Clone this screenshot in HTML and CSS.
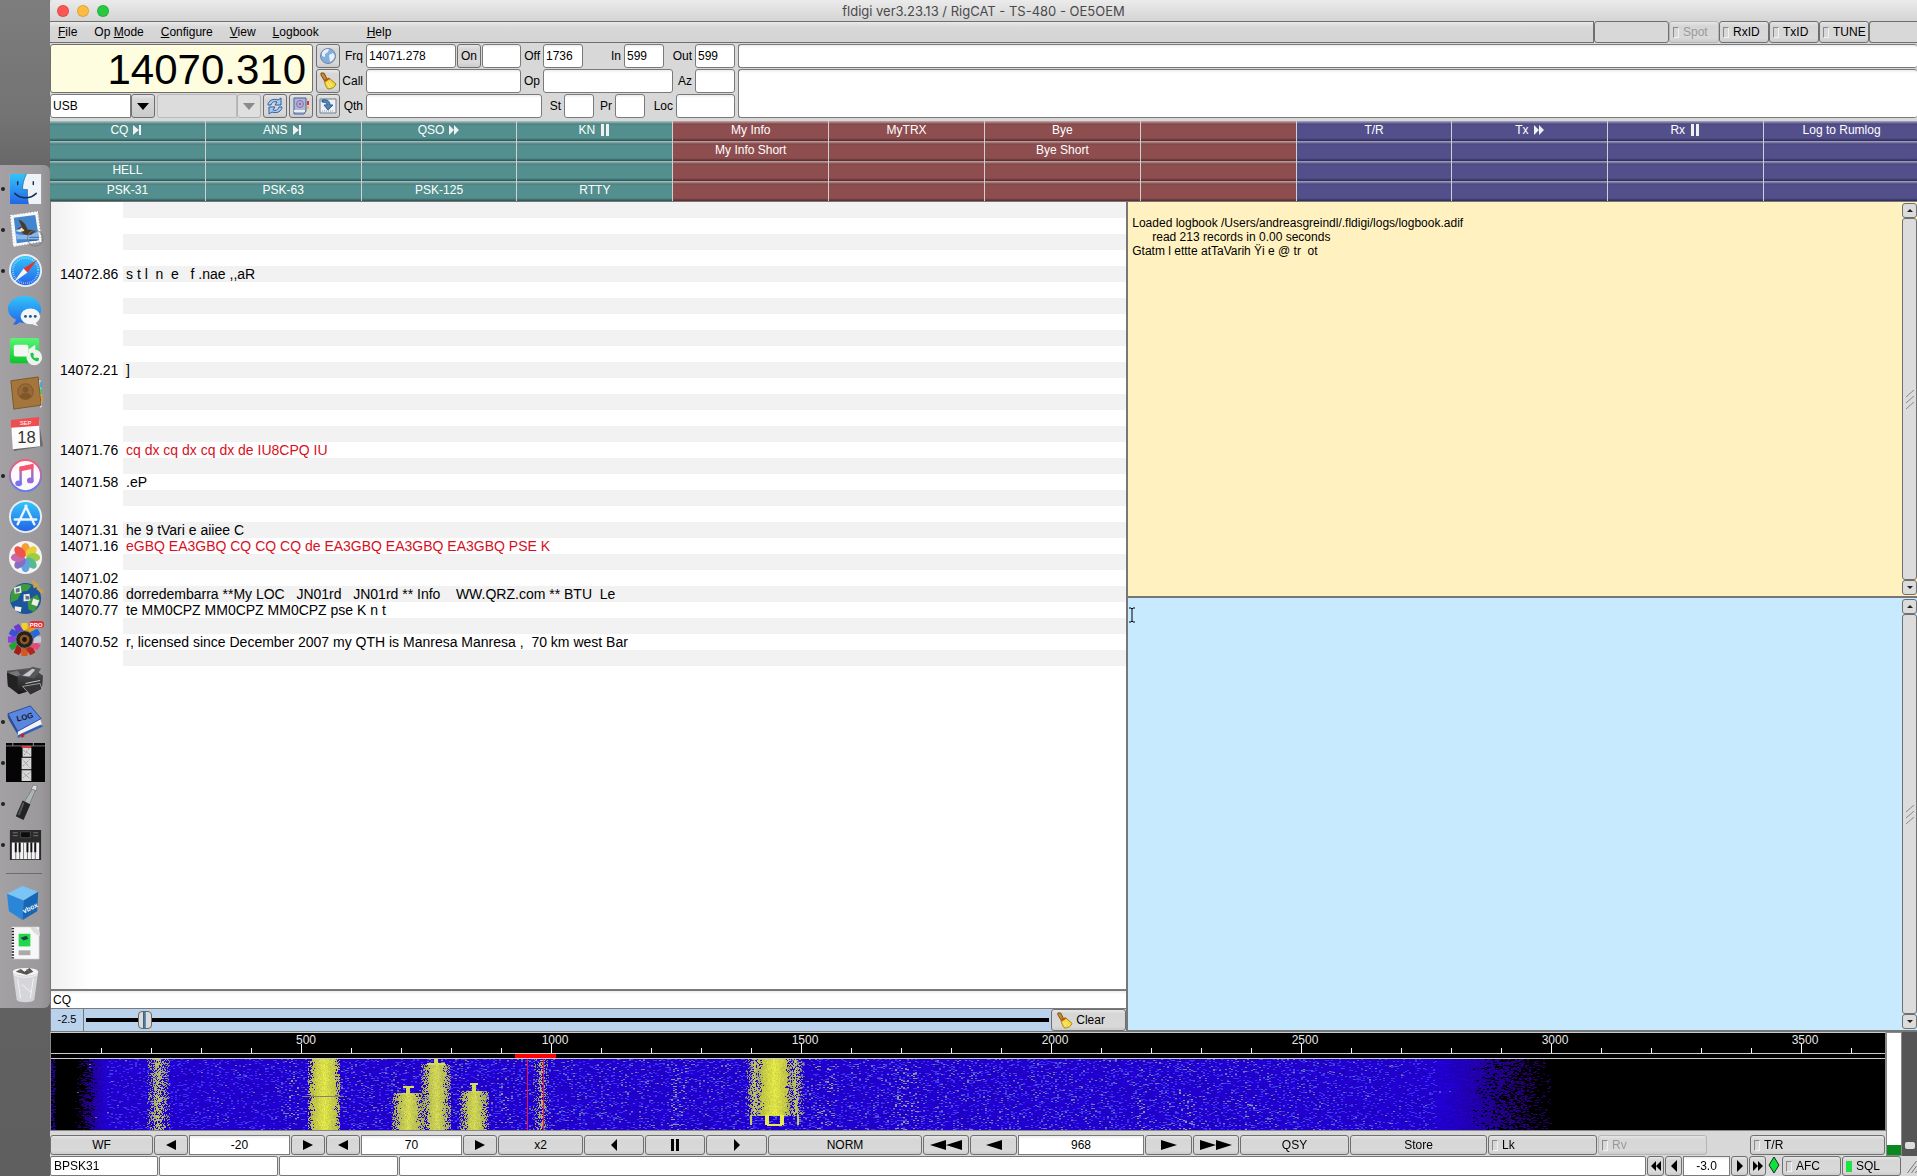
FILE: index.html
```html
<!DOCTYPE html>
<html lang="en">
<head>
    <meta charset="UTF-8">
    <meta name="viewport" content="width=device-width, initial-scale=1.0">
    <title>fldigi ver3.23.13 / RigCAT - TS-480 - OE5OEM</title>
    <link rel="stylesheet" href="styles.css">
</head>
<body>
    <svg class="defs" width="0" height="0" aria-hidden="true">
        <defs>
            <linearGradient id="g-blue" x1="0" y1="0" x2="0" y2="1"><stop offset="0" stop-color="#31c5fa"/><stop offset="1" stop-color="#2464e8"/></linearGradient>
            <linearGradient id="g-green" x1="0" y1="0" x2="0" y2="1"><stop offset="0" stop-color="#5af575"/><stop offset="1" stop-color="#0bc52c"/></linearGradient>
            <linearGradient id="g-pink" x1="0" y1="0" x2="0" y2="1"><stop offset="0" stop-color="#fb5b72"/><stop offset="1" stop-color="#5b7df5"/></linearGradient>
            <linearGradient id="g-dark" x1="0" y1="0" x2="0" y2="1"><stop offset="0" stop-color="#5a5a5a"/><stop offset="1" stop-color="#161616"/></linearGradient>
            <symbol id="broom" viewBox="0 0 18 18">
                <path d="M2 1l3 0 3 6-3 1-3-5z" fill="#c58a3a" stroke="#7a4d14"/>
                <path d="M5 8l5-2 7 6c-1 3-4 5-8 5-2-2-3-5-4-9z" fill="#f3d83c" stroke="#a8830f"/>
                <path d="M5 8l5-2 1 1-5 3z" fill="#c6451f"/>
                <path d="M8 11l3 5M10 10l4 5" stroke="#fdf3a0" fill="none"/>
            </symbol>
            <symbol id="left" viewBox="0 0 12 12"><path d="M11 1v10L1 6z"/></symbol>
            <symbol id="right" viewBox="0 0 12 12"><path d="M1 1v10l10-5z"/></symbol>
            <symbol id="thinleft" viewBox="0 0 12 12"><path d="M9 0v12L3 6z"/></symbol>
            <symbol id="thinright" viewBox="0 0 12 12"><path d="M3 0v12l6-6z"/></symbol>
            <symbol id="fastleft" viewBox="0 0 34 12"><path d="M17 1v10L1 6zM33 1v10L17 6z"/></symbol>
            <symbol id="fastright" viewBox="0 0 34 12"><path d="M1 1v10l16-5zM17 1v10l16-5z"/></symbol>
            <symbol id="dblleft" viewBox="0 0 12 12"><path d="M6 1v10L1 6zM11 1v10L6 6z"/></symbol>
            <symbol id="dblright" viewBox="0 0 12 12"><path d="M1 1v10l5-5zM6 1v10l5-5z"/></symbol>
            <symbol id="pause" viewBox="0 0 12 12"><path d="M2 0h3v12H2zM7 0h3v12H7z"/></symbol>
            <symbol id="next" viewBox="0 0 12 12"><path d="M1 1v10l6-5zM7 1h2v10H7z"/></symbol>
        </defs>
    </svg>

    <nav class="dock" aria-label="Dock">
        <ul>
            <li class="running"><svg viewBox="0 0 40 40"><path d="M4 5h32v31H4z" fill="#eef3f8"/><path d="M4 5h17c-3 6-4 11-4 16h5c0 6 0 10 1 15H4z" fill="url(#g-blue)"/><path d="M21 5c-3 6-4 11-4 16h5c0 6 0 10 1 15" fill="none" stroke="#1c4f86" stroke-width=".6"/><path d="M12 13v3M28 13v3M9 25c6 6 16 6 22 0" fill="none" stroke="#17304f" stroke-width="1.5" stroke-linecap="round"/></svg></li>
            <li class="running"><svg viewBox="0 0 40 40"><path d="M5 6l27-4 4 30-28 5z" fill="#f7f7f7" stroke="#fff" stroke-width="1.5" stroke-dasharray="2 1"/><path d="M8 8l22-3 4 26-23 3z" fill="#4186cf"/><path d="M11 30l-1-6c8 3 16 2 23-2l1 8z" fill="#8ab8e8"/><path d="M13 10c5 1 8 6 9 10l9 1-5 4c-4 2-9 0-11-4l-3-2 4-2z" fill="#4f3a28"/><path d="M16 18c-2 2-4 3-6 3 2 2 6 2 9 0z" fill="#e8e0d0"/><circle cx="30" cy="29" r="8" fill="none" stroke="#777" stroke-width="1.2" opacity=".7"/><path d="M24 28h10M24 31h8" stroke="#346" opacity=".7"/></svg></li>
            <li class="running"><svg viewBox="0 0 40 40"><circle cx="20" cy="20" r="17" fill="#e9edf0"/><circle cx="20" cy="20" r="15" fill="url(#g-blue)"/><circle cx="20" cy="20" r="13" fill="none" stroke="#bde4ff" stroke-dasharray=".6 1.4" stroke-width="2"/><path d="M32 9L18 18l4 4z" fill="#e5342f"/><path d="M8 32l10-14 4 4z" fill="#f4f4f4"/></svg></li>
            <li><svg viewBox="0 0 40 40"><path d="M19 4c10 0 17 6 17 14s-7 14-17 14l-5-1c-2 2-5 3-7 2 2-1 3-3 3-5-5-2-8-6-8-11C2 10 9 4 19 4z" fill="url(#g-blue)"/><ellipse cx="25" cy="25" rx="10" ry="8" fill="#f3f6f9"/><path d="M30 31l3 4-6-2z" fill="#f3f6f9"/><circle cx="20" cy="25" r="1.5" fill="#27567f"/><circle cx="25" cy="25" r="1.5" fill="#27567f"/><circle cx="30" cy="25" r="1.5" fill="#27567f"/></svg></li>
            <li><svg viewBox="0 0 40 40"><rect x="4" y="5" width="30" height="26" rx="2" fill="url(#g-green)"/><rect x="8" y="12" width="15" height="12" rx="2" fill="#f2f7f2"/><path d="M23 17l7-5v12l-7-5z" fill="#f2f7f2"/><circle cx="29" cy="25" r="8" fill="#eef2ee"/><path d="M25 21c0 5 4 8 8 8l1-3-3-1-1 1c-1 0-2-2-2-3l1-1-2-2z" fill="#1bc940"/></svg></li>
            <li><svg viewBox="0 0 40 40"><path d="M33 6l3 1 1 26-2 2z" fill="#ddd"/><path d="M35 8h2v6h-2z" fill="#3aa6dd"/><path d="M35 15h2v6h-2z" fill="#53c561"/><path d="M36 22h2v6h-2z" fill="#e8902b"/><path d="M5 7l28-4 3 29-28 4z" fill="#a5763b" stroke="#7d5626"/><circle cx="20" cy="18" r="8" fill="#97693a" stroke="#80572a"/><circle cx="20" cy="16" r="3" fill="#7f5729"/><path d="M14 23c2-5 10-5 12 0-3 4-9 4-12 0z" fill="#7f5729"/></svg></li>
            <li><svg viewBox="0 0 40 40"><path d="M5 6l28-3 5 29-30 5z" fill="#6b6b6b"/><path d="M5 5h29l1 27-28 3z" fill="#fcfcfc"/><path d="M5 5l29-3v9L5 13z" fill="#ef4e51"/><text x="20" y="10" class="ico-sep">SEP</text><text x="21" y="29" class="ico-day">18</text></svg></li>
            <li class="running"><svg viewBox="0 0 40 40"><circle cx="20" cy="20" r="16" fill="#fdf9fd" stroke="url(#g-pink)" stroke-width="2"/><path d="M15 27V12l12-2v14" fill="none" stroke="url(#g-pink)" stroke-width="2.5"/><path d="M14 11l14-3v5l-14 3z" fill="#f5566f"/><ellipse cx="13" cy="28" rx="3.5" ry="3" fill="#7a72ee"/><ellipse cx="25" cy="25" rx="3.5" ry="3" fill="#9869dd"/></svg></li>
            <li><svg viewBox="0 0 40 40"><circle cx="20" cy="20" r="17" fill="#e9edf0"/><circle cx="20" cy="20" r="15" fill="url(#g-blue)"/><path d="M20 9l9 19M21 9l-9 19M9 23h22" fill="none" stroke="#e9f5ff" stroke-width="2.5" stroke-linecap="round"/></svg></li>
            <li><svg viewBox="0 0 40 40"><circle cx="20" cy="20" r="17" fill="#f4f4f2"/><g opacity=".95"><ellipse cx="20" cy="12" rx="4.5" ry="7" fill="#f79a28"/><ellipse cx="20" cy="12" rx="4.5" ry="7" fill="#e6cf2b" transform="rotate(45 20 20)"/><ellipse cx="20" cy="12" rx="4.5" ry="7" fill="#9ac93c" transform="rotate(90 20 20)"/><ellipse cx="20" cy="12" rx="4.5" ry="7" fill="#4fb98d" transform="rotate(135 20 20)"/><ellipse cx="20" cy="12" rx="4.5" ry="7" fill="#5b9ede" transform="rotate(180 20 20)"/><ellipse cx="20" cy="12" rx="4.5" ry="7" fill="#8068c4" transform="rotate(225 20 20)"/><ellipse cx="20" cy="12" rx="4.5" ry="7" fill="#c662a8" transform="rotate(270 20 20)"/><ellipse cx="20" cy="12" rx="4.5" ry="7" fill="#ec4c44" transform="rotate(315 20 20)"/></g></svg></li>
            <li><svg viewBox="0 0 40 40"><circle cx="20" cy="20" r="16" fill="#1b559b"/><path d="M8 10c6-6 15-6 18-3l-4 5-6 1-4 8-7 3c-1-5 0-11 3-14zM22 22l10-6 3 6-6 12-6-3z" fill="#3e9a3f"/><path d="M8 9l7-2 1 7-7 1zM18 16l6-1 1 7-7 1zM28 20l6 2-2 6-6-2zM9 28l7 1-1 5-6-2z" fill="#f2efe8"/><path d="M10 10l4-1v4l-4 1zM20 17l4 1v3h-4z" fill="#5f6f8c"/><path d="M27 2l4 4M32 9l6 5M28 8l5-2" stroke="#c8a44c" stroke-width="3"/></svg></li>
            <li><svg viewBox="0 0 40 40"><g transform="translate(-1 0)"><path d="M17 3h6l1 11h-8z" fill="#efd12c"/><path d="M17 3h6l1 11h-8z" fill="#e69a21" transform="rotate(30 20 20)"/><path d="M17 3h6l1 11h-8z" fill="#6a3bd1" transform="rotate(330 20 20)"/><path d="M17 3h6l1 11h-8z" fill="#3b50d8" transform="rotate(300 20 20)"/><path d="M17 3h6l1 11h-8z" fill="#8f3ee0" transform="rotate(270 20 20)"/><path d="M17 3h6l1 11h-8z" fill="#25a339" transform="rotate(240 20 20)"/><path d="M17 3h6l1 11h-8z" fill="#a51c1c" transform="rotate(210 20 20)"/><path d="M17 3h6l1 11h-8z" fill="#d4571e" transform="rotate(180 20 20)"/><path d="M17 3h6l1 11h-8z" fill="#b3261e" transform="rotate(150 20 20)"/><path d="M17 3h6l1 11h-8z" fill="#e84a78" transform="rotate(120 20 20)"/><path d="M17 3h6l1 11h-8z" fill="#c5ccd8" transform="rotate(90 20 20)"/><path d="M17 3h6l1 11h-8z" fill="#2469da" transform="rotate(60 20 20)"/></g><circle cx="19" cy="20" r="9" fill="#25221f" stroke="#777"/><circle cx="19" cy="20" r="5" fill="#8b5a22"/><circle cx="19" cy="20" r="2.5" fill="#201008"/><rect x="24" y="1" width="15" height="7" rx="3" fill="#e62d35"/><text x="31" y="7" class="ico-pro">PRO</text></svg></li>
            <li><svg viewBox="0 0 40 40"><path d="M1 10l26-3 11 8-1 12-24 7L2 26z" fill="url(#g-dark)"/><path d="M14 15l13-9 9 2-7 10z" fill="#55585c"/><path d="M17 15l10-7 3 1-6 7z" fill="#c7c9cc"/><path d="M1 12l11 4v15L2 26z" fill="#222"/><path d="M2 12l10-2 3 4-4 2z" fill="#777"/><path d="M17 26l18-3 2 6-12 6z" fill="#333" stroke="#bbb" stroke-width=".8"/><path d="M20 23l15-3" stroke="#ccc"/></svg></li>
            <li class="running"><svg viewBox="0 0 40 40"><path d="M12 35l25-11-2-7-23 11z" fill="#f3f3f3"/><path d="M2 12L25 4l11 13-24 13z" fill="#5a86de" stroke="#284b9d"/><path d="M2 12l10 18c0 2 0 5 2 7L4 20c-2-4-3-6-2-8z" fill="#2d4d99"/><path d="M12 37l26-12-2-2-24 11z" fill="#3560b8"/><path d="M15 33l3-1 1 3-3 2z" fill="#c22"/><text x="20" y="18" class="ico-log" transform="rotate(-14 20 18)">LOG</text></svg></li>
            <li class="running"><svg viewBox="0 0 40 40"><path d="M0 0h40v40H0z" fill="#050505"/><path d="M0 3h40" stroke="#777"/><path d="M7 0v3M28 0v3" stroke="#8aa38a"/><path d="M17 5h9v9h-9zM16 15h10v12H16zM16 28h10v11H16z" fill="#d8d8d8"/><path d="M17 7l8 5M24 5l-6 8M17 17l7 8M24 17l-7 7M17 30l8 7M25 30l-8 6" stroke="#777" stroke-dasharray="1 1"/><path d="M16 4h10" stroke="#e0404c" stroke-width="2"/></svg></li>
            <li class="running"><svg viewBox="0 0 40 40"><path d="M19 18l8-13 3 2-6 14z" fill="#aeb6ba" stroke="#666" stroke-width=".6"/><path d="M26 5l2-4 4 1-1 5z" fill="#ddd" stroke="#666" stroke-width=".6"/><path d="M17 17l8 4-7 16-8-4z" fill="#222"/><path d="M18 19l-5 13" stroke="#555" stroke-width="2"/></svg></li>
            <li class="running"><svg viewBox="0 0 40 40"><path d="M4 5h32v31H4z" fill="#2a2a2a"/><path d="M15 7h10v6H15z" fill="#0c0c0c" stroke="#666" stroke-width=".6"/><path d="M7 8h5M7 11h5M28 8h5M28 11h5" stroke="#777"/><path d="M6 18h28v17H6z" fill="#f4f4f4"/><path d="M10 18v17M14 18v17M18 18v17M22 18v17M26 18v17M30 18v17" stroke="#555" stroke-width=".8"/><path d="M10 18v10M14 18v10M22 18v10M26 18v10M30 18v10" stroke="#111" stroke-width="2"/></svg></li>
            <li class="divider"></li>
            <li><svg viewBox="0 0 40 40"><path d="M1 11l16-8 16 6-15 9z" fill="#79c6f6"/><path d="M1 11l17 7-1 20L3 29z" fill="#2a86d8"/><path d="M18 18l15-9-1 20-15 9z" fill="#1566b4"/><text x="25" y="28" class="ico-vbox" transform="rotate(-26 25 26)">vbox</text></svg></li>
            <li><svg viewBox="0 0 40 40"><path d="M6 3h28v33H6z" fill="#f7f7f7" stroke="#ccc" stroke-width=".6"/><path d="M7 4v32" stroke="#222" stroke-width="2.5" stroke-dasharray="1.5 1.5"/><path d="M13 10h12v13H13z" fill="#1fd84c"/><path d="M15 14l6-2 2 3-5 2z" fill="#244"/><path d="M13 27h12v5H13z" fill="#aaa"/><path d="M25 3c2 5 5 8 10 9l-1-5-4-4z" fill="#ddd"/></svg></li>
            <li><svg viewBox="0 0 40 40"><path d="M7 7h26l-4 29c-3 3-15 3-18 0z" fill="#dcdde0" opacity=".9"/><path d="M8 10c8 4 17 3 24 0M12 14l3 20M28 14l-3 20M16 20l10 8" fill="none" stroke="#fff" opacity=".7"/><ellipse cx="20" cy="7" rx="13" ry="4" fill="#f4f4f4"/><path d="M10 7l5-3 4 3 5-4 4 4-7 3z" fill="#4d5550"/><path d="M13 5l3 3M21 4l4 4" stroke="#c45b4b"/></svg></li>
        </ul>
    </nav>

    <div class="window">
        <header class="titlebar">
            <div class="lights"><button class="light close" aria-label="Close"></button><button class="light minimize" aria-label="Minimize"></button><button class="light zoom" aria-label="Zoom"></button></div>
            <h1>fldigi ver3.23.13 / RigCAT - TS-480 - OE5OEM</h1>
        </header>

        <div class="menubar">
            <nav class="menus">
                <a href="#file"><u>F</u>ile</a>
                <a href="#opmode">Op <u>M</u>ode</a>
                <a href="#configure"><u>C</u>onfigure</a>
                <a href="#view"><u>V</u>iew</a>
                <a href="#logbook"><u>L</u>ogbook</a>
                <a href="#help" class="help"><u>H</u>elp</a>
            </nav>
            <div class="status-slot"></div>
            <label class="toggle disabled"><input type="checkbox" disabled>Spot</label>
            <label class="toggle"><input type="checkbox">RxID</label>
            <label class="toggle"><input type="checkbox">TxID</label>
            <label class="toggle"><input type="checkbox">TUNE</label>
            <div class="end-slot"></div>
        </div>

        <section class="rig">
            <div class="rig-freq">
                <output class="frequency">14070.310</output>
                <div class="rig-row">
                    <div class="combo"><select aria-label="Mode"><option>USB</option></select><span class="arrow"></span></div>
                    <div class="combo disabled"><select aria-label="Bandwidth" disabled><option></option></select><span class="arrow"></span></div>
                    <button class="btn icon" aria-label="Refresh"><svg viewBox="0 0 18 18"><path d="M2 8c0-4 5-7 10-5l3-2v7H9l2-3C8 4 6 5 5 8zM16 10c0 4-5 7-10 5l-3 2v-7h6l-2 3c3 1 5 0 6-3z" fill="#a9cbf0" stroke="#2f5f9f"/></svg></button>
                    <button class="btn icon" aria-label="Address book"><svg viewBox="0 0 18 18"><path d="M2 1h12v13l-2 3H2z" fill="#a9b9de" stroke="#4a5f94"/><circle cx="8" cy="7" r="3.5" fill="none" stroke="#a0609a"/><circle cx="8" cy="7" r="1.3" fill="#a0609a"/><path d="M2 14h11" stroke="#eee" stroke-width="2"/><path d="M15 4h2v4h-2z" fill="#d33"/><path d="M15 9h2v3h-2z" fill="#e7c636"/></svg></button>
                </div>
            </div>

            <form class="log-entry">
                <div class="log-row row-qso">
                    <button type="button" class="btn icon" aria-label="Look up"><svg viewBox="0 0 18 18"><circle cx="9" cy="9" r="7.5" fill="#84aedd" stroke="#7485a3"/><path d="M3 6c2-4 5-4 7-4l-1 3-3 2v3L3 9zM10 8l4-2 2 3-2 4-3 2z" fill="#e6f0fb"/></svg></button>
                    <label for="frq">Frq</label><input id="frq" type="text" value="14071.278">
                    <button type="button" class="btn on">On</button><input type="text" aria-label="Time on">
                    <label for="off">Off</label><input id="off" type="text" value="1736">
                    <label for="in">In</label><input id="in" type="text" value="599">
                    <label for="out">Out</label><input id="out" type="text" value="599">
                </div>
                <div class="log-row row-call">
                    <button type="button" class="btn icon" aria-label="Clear log fields"><svg><use href="#broom"/></svg></button>
                    <label for="call">Call</label><input id="call" type="text">
                    <label for="op">Op</label><input id="op" type="text">
                    <label for="az">Az</label><input id="az" type="text">
                </div>
                <div class="log-row row-qth">
                    <button type="button" class="btn icon" aria-label="Save"><svg viewBox="0 0 18 18"><path d="M1 2h16v14H1z" fill="#eef1f5" stroke="#6f7b8d"/><path d="M3 3c5-1 8 1 8 5h3l-5 5-4-5h3c0-2-2-3-5-3z" fill="#4f86b5" stroke="#2c5f91"/><path d="M3 14h12" stroke="#999" stroke-dasharray="1 1"/></svg></button>
                    <label for="qth">Qth</label><input id="qth" type="text">
                    <label for="st">St</label><input id="st" type="text">
                    <label for="pr">Pr</label><input id="pr" type="text">
                    <label for="loc">Loc</label><input id="loc" type="text">
                </div>
            </form>

            <div class="notes">
                <input type="text" aria-label="Country">
                <textarea aria-label="Notes"></textarea>
            </div>
        </section>

        <section class="macros">
            <button class="teal">CQ <svg><use href="#next"/></svg></button><button class="teal">ANS <svg><use href="#next"/></svg></button><button class="teal">QSO <svg><use href="#dblright"/></svg></button><button class="teal">KN <svg><use href="#pause"/></svg></button>
            <button class="red">My Info</button><button class="red">MyTRX</button><button class="red">Bye</button><button class="red"></button>
            <button class="blue">T/R</button><button class="blue">Tx <svg><use href="#dblright"/></svg></button><button class="blue">Rx <svg><use href="#pause"/></svg></button><button class="blue">Log to Rumlog</button>

            <button class="teal"></button><button class="teal"></button><button class="teal"></button><button class="teal"></button>
            <button class="red">My Info Short</button><button class="red"></button><button class="red">Bye Short</button><button class="red"></button>
            <button class="blue"></button><button class="blue"></button><button class="blue"></button><button class="blue"></button>

            <button class="teal">HELL</button><button class="teal"></button><button class="teal"></button><button class="teal"></button>
            <button class="red"></button><button class="red"></button><button class="red"></button><button class="red"></button>
            <button class="blue"></button><button class="blue"></button><button class="blue"></button><button class="blue"></button>

            <button class="teal">PSK-31</button><button class="teal">PSK-63</button><button class="teal">PSK-125</button><button class="teal">RTTY</button>
            <button class="red"></button><button class="red"></button><button class="red"></button><button class="red"></button>
            <button class="blue"></button><button class="blue"></button><button class="blue"></button><button class="blue"></button>
        </section>

        <main class="panes">
            <section class="browser">
                <div class="channels">
                    <table>
                        <tbody>
                            <tr><th></th><td></td></tr>
                            <tr><th></th><td></td></tr>
                            <tr><th></th><td></td></tr>
                            <tr><th></th><td></td></tr>
                            <tr><th>14072.86</th><td>s t l  n  e   f .nae ,,aR</td></tr>
                            <tr><th></th><td></td></tr>
                            <tr><th></th><td></td></tr>
                            <tr><th></th><td></td></tr>
                            <tr><th></th><td></td></tr>
                            <tr><th></th><td></td></tr>
                            <tr><th>14072.21</th><td>]</td></tr>
                            <tr><th></th><td></td></tr>
                            <tr><th></th><td></td></tr>
                            <tr><th></th><td></td></tr>
                            <tr><th></th><td></td></tr>
                            <tr class="cq"><th>14071.76</th><td>cq dx cq dx cq dx de IU8CPQ IU</td></tr>
                            <tr><th></th><td></td></tr>
                            <tr><th>14071.58</th><td>.eP</td></tr>
                            <tr><th></th><td></td></tr>
                            <tr><th></th><td></td></tr>
                            <tr><th>14071.31</th><td>he 9 tVari e aiiee C</td></tr>
                            <tr class="cq"><th>14071.16</th><td>eGBQ EA3GBQ CQ CQ CQ de EA3GBQ EA3GBQ EA3GBQ PSE K</td></tr>
                            <tr><th></th><td></td></tr>
                            <tr><th>14071.02</th><td></td></tr>
                            <tr><th>14070.86</th><td>dorredembarra **My LOC   JN01rd   JN01rd ** Info    WW.QRZ.com ** BTU  Le</td></tr>
                            <tr><th>14070.77</th><td>te MM0CPZ MM0CPZ MM0CPZ pse K n t</td></tr>
                            <tr><th></th><td></td></tr>
                            <tr><th>14070.52</th><td>r, licensed since December 2007 my QTH is Manresa Manresa ,  70 km west Bar</td></tr>
                            <tr><th></th><td></td></tr>
                        </tbody>
                    </table>
                </div>
                <input class="search" type="text" value="CQ" aria-label="Search text">
                <div class="squelch">
                    <output>-2.5</output>
                    <input type="range" min="0" max="1000" value="57" aria-label="Browser squelch">
                    <button class="btn clear"><svg><use href="#broom"/></svg>Clear</button>
                </div>
            </section>

            <section class="text-panes">
                <div class="text-pane rx">
                    <pre>Loaded logbook /Users/andreasgreindl/.fldigi/logs/logbook.adif
      read 213 records in 0.00 seconds
Gtatm l ettte atTaVarih Ÿi e @ tr  ot</pre>
                    <div class="scrollbar"><button aria-label="Up"><span class="up"></span></button><div class="thumb"><svg viewBox="0 0 10 20"><path d="M1 8l8-7M1 14l8-7M1 20l8-7"/></svg></div><button aria-label="Down"><span class="down"></span></button></div>
                </div>
                <div class="text-pane tx">
                    <textarea aria-label="Transmit text"></textarea>
                    <svg class="ibeam" viewBox="0 0 8 16"><path d="M1 1h2l1 1 1-1h2M4 2v12M1 15h2l1-1 1 1h2"/></svg>
                    <div class="scrollbar"><button aria-label="Up"><span class="up"></span></button><div class="thumb"><svg viewBox="0 0 10 20"><path d="M1 8l8-7M1 14l8-7M1 20l8-7"/></svg></div><button aria-label="Down"><span class="down"></span></button></div>
                </div>
            </section>
        </main>

        <section class="waterfall-area">
            <div class="waterfall-main">
                <div class="waterfall">
                    <svg class="scale">
                        <defs><pattern id="ticks" width="50" height="26" patternUnits="userSpaceOnUse"><path d="M0 15h1v5H0z" fill="#fff"/></pattern>
                        <pattern id="major" width="250" height="26" patternUnits="userSpaceOnUse"><path d="M0 11h1v9H0z" fill="#fff"/></pattern></defs>
                        <rect x="10" width="100%" height="26" fill="url(#ticks)"/>
                        <rect x="10" width="100%" height="26" fill="url(#major)"/>
                        <path d="M0 20.5h4000" class="rule"/>
                        <path d="M0 25.5h4000" class="rule"/>
                        <path d="M464 21h41v4h-41z" fill="#ff0000"/>
                        <text x="255" y="11">500</text><text x="504" y="11">1000</text><text x="754" y="11">1500</text><text x="1004" y="11">2000</text><text x="1254" y="11">2500</text><text x="1504" y="11">3000</text><text x="1754" y="11">3500</text>
                    </svg>
                    <canvas id="spectrum" width="1834" height="71"></canvas>
                </div>
                <div class="wf-controls">
                    <button class="btn">WF</button>
                    <button class="btn" aria-label="Lower level"><svg><use href="#left"/></svg></button>
                    <input type="text" value="-20" aria-label="Upper signal level">
                    <button class="btn" aria-label="Raise level"><svg><use href="#right"/></svg></button>
                    <button class="btn" aria-label="Reduce range"><svg><use href="#left"/></svg></button>
                    <input type="text" value="70" aria-label="Signal range">
                    <button class="btn" aria-label="Extend range"><svg><use href="#right"/></svg></button>
                    <button class="btn">x2</button>
                    <button class="btn" aria-label="Slide left"><svg><use href="#thinleft"/></svg></button>
                    <button class="btn" aria-label="Center"><svg><use href="#pause"/></svg></button>
                    <button class="btn" aria-label="Slide right"><svg><use href="#thinright"/></svg></button>
                    <button class="btn">NORM</button>
                    <button class="btn" aria-label="Fast down"><svg class="wide"><use href="#fastleft"/></svg></button>
                    <button class="btn" aria-label="Down"><svg class="mid" viewBox="0 0 18 12"><path d="M17 1v10L1 6z"/></svg></button>
                    <input type="text" value="968" aria-label="Carrier">
                    <button class="btn" aria-label="Up"><svg class="mid" viewBox="0 0 18 12"><path d="M1 1v10l16-5z"/></svg></button>
                    <button class="btn" aria-label="Fast up"><svg class="wide"><use href="#fastright"/></svg></button>
                    <button class="btn">QSY</button>
                    <button class="btn">Store</button>
                    <label class="toggle"><input type="checkbox">Lk</label>
                    <label class="toggle disabled"><input type="checkbox" disabled>Rv</label>
                    <span></span>
                    <label class="toggle"><input type="checkbox">T/R</label>
                </div>
            </div>
            <div class="meter"><div class="level" style="height: 8%"></div></div>
            <div class="squelch-level"><input type="range" min="0" max="100" value="6" aria-label="Squelch level"></div>
        </section>

        <footer class="statusbar">
            <div class="cell mode">BPSK31</div>
            <div class="cell short"></div>
            <div class="cell short"></div>
            <div class="cell message"></div>
            <button class="btn" aria-label="Power down fast"><svg><use href="#dblleft"/></svg></button>
            <button class="btn" aria-label="Power down"><svg><use href="#thinleft"/></svg></button>
            <input type="text" value="-3.0" aria-label="Transmit attenuator">
            <button class="btn" aria-label="Power up"><svg><use href="#thinright"/></svg></button>
            <button class="btn" aria-label="Power up fast"><svg><use href="#dblright"/></svg></button>
            <svg class="diamond" viewBox="0 0 12 18"><path d="M6 1l5 8-5 8-5-8z"/></svg>
            <label class="toggle"><input type="checkbox">AFC</label>
            <label class="toggle"><input type="checkbox" checked>SQL</label>
            <svg class="grip" viewBox="0 0 14 18"><path d="M5 17l9-12M9 17l5-7M13 17l1-2"/></svg>
        </footer>
    </div>
    <script src="waterfall.js"></script>
</body>
</html>
```
FILE: styles.css
```css
* {
    box-sizing: border-box;
}
body {
    display: flex;
    min-height: 100vh;
    margin: 0;
    overflow: hidden;
    background: linear-gradient(#7d7d7d, #737373 10%, #686868 14%, #5f5f5f);
    color: #000;
    font-family: "Liberation Sans", Arial, sans-serif;
    font-size: 12px;
}
button, input, select, textarea, output {
    font: inherit;
    color: inherit;
}
.defs {
    position: absolute;
}

/* Dock */
.dock {
    flex: none;
    align-self: flex-start;
    width: 50px;
    margin-top: 165px;
    padding: 3px 0;
    background: linear-gradient(90deg, #a3a1a4, #9b999c 80%, #908e91);
    border-top-right-radius: 6px;
    border-bottom-right-radius: 6px;
}
.dock ul {
    margin: 0;
    padding: 0;
    list-style: none;
}
.dock li {
    display: flex;
    align-items: center;
    height: 41px;
    padding-left: 6px;
}
.dock li.running {
    padding-left: 1px;
}
.dock li.running::before {
    content: "";
    width: 4px;
    height: 4px;
    margin-right: 1px;
    border-radius: 50%;
    background: #222;
}
.dock svg {
    width: 39px;
    height: 39px;
}
.dock .divider {
    height: 17px;
}
.dock .divider::before {
    content: "";
    width: 36px;
    height: 1px;
    background: #6d6b6e;
}
.ico-sep, .ico-day, .ico-pro, .ico-log, .ico-vbox {
    font-family: "Liberation Sans", Arial, sans-serif;
    text-anchor: middle;
}
.ico-sep { font-size: 6px; fill: #fff; }
.ico-day { font-size: 17px; fill: #333; }
.ico-pro { font-size: 6px; font-weight: bold; fill: #fff; }
.ico-log { font-size: 8px; font-weight: bold; fill: #10182f; }
.ico-vbox { font-size: 7px; font-weight: bold; fill: #fff; }

/* Window frame */
.window {
    display: flex;
    flex: 1;
    flex-direction: column;
    min-width: 0;
    background: #d8d8d8;
}
.titlebar {
    display: flex;
    align-items: center;
    height: 21px;
    background: linear-gradient(#ebebeb, #d4d4d4);
    border-top-left-radius: 4px;
}
.lights {
    display: flex;
    gap: 8px;
    width: 60px;
    padding-left: 7px;
}
.light {
    width: 12px;
    height: 12px;
    padding: 0;
    border: 1px solid rgba(0, 0, 0, 0.12);
    border-radius: 50%;
}
.close { background: #fc5753; }
.minimize { background: #fdbc40; }
.zoom { background: #28c940; }
.titlebar h1 {
    flex: 1;
    margin: 0;
    padding-right: 60px;
    color: #4a4a4a;
    font-family: Inter, sans-serif;
    font-size: 13px;
    font-weight: normal;
    text-align: center;
}

/* Shared widgets */
.btn, .toggle {
    display: flex;
    align-items: center;
    justify-content: center;
    padding: 0;
    border: 1px solid #6f6f6f;
    border-radius: 3px;
    background: linear-gradient(#e6e6e6, #d6d6d6 20%, #d9d9d9 80%, #cbcbcb);
}
.toggle {
    justify-content: flex-start;
    gap: 4px;
    padding-left: 3px;
}
.toggle input {
    width: 6px;
    height: 11px;
    margin: 0;
    appearance: none;
    border: 1px solid #8a8a8a;
    border-right-color: #f2f2f2;
    border-bottom-color: #f2f2f2;
}
.toggle input:checked {
    background: #0bef39;
    border-color: #3ccf56;
}
.toggle.disabled {
    color: #9a9a9a;
    border-color: #b5b5b5;
}
input[type="text"], textarea {
    min-width: 0;
    padding: 0 2px;
    border: 1px solid #7a7a7a;
    border-radius: 3px;
    background: #fff linear-gradient(#ececec, #fff 3px);
}
textarea {
    resize: none;
}

/* Menu bar */
.menubar {
    display: flex;
    height: 22px;
}
.menus {
    display: flex;
    flex: 1;
    gap: 17px;
    align-items: center;
    padding-left: 8px;
    border: 1px solid #6f6f6f;
    border-left: 0;
    background: linear-gradient(#eaeaea, #d8d8d8 25%, #d4d4d4);
}
.menus a {
    color: #000;
    text-decoration: none;
}
.menus .help {
    margin-left: 31px;
}
.status-slot {
    width: 75px;
    border: 1px solid #6f6f6f;
    border-radius: 3px;
}
.menubar .toggle {
    width: 50px;
}
.end-slot {
    width: 48px;
    border: 1px solid #6f6f6f;
    border-right: 0;
    border-radius: 3px 0 0 3px;
}

/* Rig control and log entry */
.rig {
    display: flex;
    gap: 3px;
    height: 78px;
    padding: 1px 0 3px;
}
.rig-freq {
    width: 263px;
}
.frequency {
    display: block;
    height: 49px;
    padding-right: 6px;
    border: 1px solid #6f6f6f;
    border-radius: 3px;
    background: #fffde0;
    font-size: 42px;
    line-height: 49px;
    text-align: right;
}
.rig-row {
    display: flex;
    gap: 2px;
    height: 24px;
    margin-top: 1px;
}
.rig-row .combo {
    width: 105px;
}
.icon {
    width: 24px;
}
.icon svg {
    width: 18px;
    height: 18px;
}
.combo {
    display: flex;
}
.combo select {
    flex: 1;
    min-width: 0;
    padding: 0 2px;
    appearance: none;
    border: 1px solid #7a7a7a;
    border-radius: 3px 0 0 3px;
    background: #fff;
}
.combo .arrow {
    display: flex;
    align-items: center;
    justify-content: center;
    width: 24px;
    border: 1px solid #6f6f6f;
    border-radius: 3px;
    background: linear-gradient(#e6e6e6, #d6d6d6 20%, #cbcbcb);
}
.combo .arrow::before {
    content: "";
    border: 6px solid transparent;
    border-top: 7px solid #000;
    border-bottom: 0;
}
.combo.disabled select, .combo.disabled .arrow {
    background: #dfdfdf;
    border-color: #b0b0b0;
}
.combo.disabled .arrow::before {
    border-top-color: #8a8a8a;
}
.log-entry {
    display: flex;
    flex-direction: column;
    gap: 1px;
    width: 419px;
}
.log-row {
    display: grid;
    height: 24px;
}
.log-row label {
    align-self: center;
    padding-right: 3px;
    text-align: right;
}
.log-row .on {
    margin: 0 1px;
}
.row-qso {
    grid-template-columns: 24px 26px 90px 26px 39px 22px 40px 41px 40px 31px 40px;
}
.row-call {
    grid-template-columns: 24px 26px 155px 22px 130px 22px 40px;
}
.row-qth {
    grid-template-columns: 24px 26px 176px 22px 30px 21px 30px 31px 59px;
}
.notes {
    display: flex;
    flex: 1;
    flex-direction: column;
    gap: 1px;
}
.notes input {
    height: 24px;
}
.notes textarea {
    flex: 1;
}
.notes input, .notes textarea {
    border-right: 0;
}

/* Macro keys, the last column runs under the window edge */
.macros {
    display: grid;
    grid-template-columns: repeat(12, minmax(0, 1fr));
    grid-auto-rows: 20px;
    margin-right: -3px;
    border-bottom: 1px solid #777;
}
.macros button {
    display: flex;
    gap: 4px;
    align-items: center;
    justify-content: center;
    padding: 0 0 2px;
    border: 0;
    border-right: 1px solid #d0d0d0;
    color: #fff;
}
.macros svg {
    width: 12px;
    height: 12px;
    fill: #f0f0f0;
}
.teal {
    background: linear-gradient(#a9c7c7, #508080 3px, #528f8e 5px, #528f8e 17px, #2c5252);
}
.red {
    background: linear-gradient(#c7a7a8, #824849 3px, #8e4e50 5px, #8e4e50 17px, #522b2c);
}
.blue {
    background: linear-gradient(#a9a7c8, #4c4880 3px, #534f8b 5px, #534f8b 17px, #2d2a52);
}

/* Signal browser */
.panes {
    display: flex;
    flex: 1;
    min-height: 0;
}
.browser {
    display: flex;
    flex: 1077;
    flex-direction: column;
    min-width: 0;
    border: 1px solid #777;
    border-top: 0;
    border-right-width: 2px;
}
.channels {
    flex: 1;
    overflow: hidden;
    background: linear-gradient(90deg, #f0f0f0, #fff 40px);
}
.channels table {
    width: 100%;
    table-layout: fixed;
    border-spacing: 0;
    font-size: 14px;
    line-height: 16px;
}
.channels th, .channels td {
    height: 16px;
    padding: 0;
    font-weight: normal;
    text-align: left;
    white-space: pre;
}
.channels th {
    width: 72px;
    padding-left: 9px;
}
.channels td {
    padding-left: 3px;
}
.channels tr:nth-child(odd) td {
    background: #f2f2f2;
}
.channels .cq td {
    color: #d80f1e;
}
input.search {
    height: 20px;
    border-width: 2px 0 1px;
    border-radius: 0;
}
.squelch {
    display: flex;
    height: 22px;
    background: #bad2ec;
}
.squelch output {
    width: 33px;
    border-right: 1px solid #777;
    font-size: 11px;
    line-height: 21px;
    text-align: center;
}
.squelch input {
    flex: 1;
    min-width: 0;
    margin: 0;
    appearance: none;
    background: linear-gradient(#000, #000) center / calc(100% - 4px) 4px no-repeat;
}
.squelch input::-webkit-slider-thumb {
    width: 14px;
    height: 18px;
    appearance: none;
    border: 1px solid #666;
    border-radius: 4px;
    background: linear-gradient(90deg, transparent 4px, #2d5a7a 4px, #6d9ab8 7px, transparent 7px), #dcdcdc;
}
.clear {
    gap: 3px;
    width: 75px;
    justify-content: flex-start;
    padding-left: 4px;
}
.clear svg {
    width: 17px;
    height: 17px;
}

/* Receive and transmit text */
.text-panes {
    display: flex;
    flex: 790;
    flex-direction: column;
    min-width: 0;
}
.text-pane {
    position: relative;
    display: flex;
    min-height: 0;
    border-bottom: 2px solid #777;
}
.rx {
    flex: 396;
    background: #fff2c0;
}
.tx {
    flex: 434;
    background: #c8eaff;
}
.text-pane pre {
    flex: 1;
    margin: 0;
    padding: 14px 4px;
    font-family: inherit;
    font-size: 12px;
    line-height: 14px;
}
.text-pane textarea {
    flex: 1;
    border: 0;
    background: none;
}
.ibeam {
    position: absolute;
    top: 9px;
    left: 0;
    width: 8px;
    height: 16px;
    fill: none;
    stroke: #000;
}
.scrollbar {
    display: flex;
    flex-direction: column;
    width: 15px;
    padding: 1px 0;
}
.scrollbar button, .thumb {
    display: flex;
    align-items: center;
    justify-content: center;
    height: 15px;
    padding: 0;
    border: 1px solid #6f6f6f;
    border-radius: 3px;
    background: #dcdcdc;
}
.thumb {
    flex: 1;
}
.thumb svg {
    width: 10px;
    height: 20px;
    fill: none;
    stroke: #8a8a8a;
}
.up, .down {
    border: 3px solid transparent;
}
.up {
    border-top: 0;
    border-bottom-color: #222;
}
.down {
    border-bottom: 0;
    border-top-color: #222;
}

/* Waterfall */
.waterfall-area {
    display: flex;
    height: 124px;
}
.waterfall-main {
    flex: 1;
    min-width: 0;
}
.waterfall {
    height: 99px;
    overflow: hidden;
    border: 1px solid #888;
    border-top-color: #ccc;
    background: #000;
}
.scale, #spectrum {
    display: block;
}
.scale {
    width: 100%;
    height: 26px;
}
.scale .rule {
    stroke: #ccc;
}
.scale text {
    fill: #e8e8e8;
    font-size: 12px;
    text-anchor: middle;
}
.wf-controls {
    display: grid;
    grid-template-columns: 103fr 34fr 101fr 34fr 34fr 101fr 34fr 85fr 60fr 60fr 61fr 154fr 46fr 47fr 126fr 47fr 46fr 109fr 137fr 109fr 109fr 41fr 135fr;
    gap: 1px;
    height: 20px;
    margin: 4px 1px 1px 0;
}
.wf-controls > * {
    min-width: 0;
}
.wf-controls input[type="text"], .statusbar input[type="text"] {
    border-radius: 0;
    text-align: center;
}
.wf-controls svg, .statusbar .btn svg {
    width: 12px;
    height: 12px;
}
.wf-controls .wide {
    width: 34px;
}
.wf-controls .mid {
    width: 18px;
}
.meter {
    display: flex;
    flex-direction: column;
    justify-content: flex-end;
    width: 16px;
    border: 1px solid #888;
    background: #fff;
}
.level {
    background: #0a8a1e;
}
.squelch-level {
    width: 15px;
    background: #555;
}
.squelch-level input {
    width: 15px;
    height: 124px;
    margin: 0;
    appearance: none;
    background: none;
    writing-mode: vertical-lr;
    direction: rtl;
}
.squelch-level input::-webkit-slider-thumb {
    width: 10px;
    height: 7px;
    appearance: none;
    border-radius: 2px;
    background: #ddd;
}

/* Status bar */
.statusbar {
    display: flex;
    gap: 1px;
    height: 20px;
}
.cell {
    padding: 0 3px;
    border: 1px solid #777;
    border-radius: 2px;
    background: #fff;
    line-height: 18px;
}
.mode {
    width: 108px;
}
.short {
    width: 119px;
}
.message {
    flex: 1;
}
.statusbar .btn {
    width: 17px;
}
.statusbar input[type="text"] {
    width: 47px;
}
.diamond {
    width: 14px;
    height: 18px;
    fill: #0be53a;
    stroke: #222;
}
.statusbar .toggle {
    width: 59px;
}
.grip {
    width: 15px;
    height: 18px;
    stroke: #777;
}
```
FILE: waterfall.js
```js
const canvas = document.getElementById("spectrum");
const ctx = canvas.getContext("2d");
const width = canvas.width;
const height = canvas.height;

// center, half width, top row, strength
const signals = [
    [107, 9, 0, 0.42],
    [273, 13, 0, 0.97],
    [357, 13, 34, 0.78],
    [385, 12, 5, 0.75],
    [423, 12, 32, 0.75],
    [490, 6, 0, 0.3],
    [703, 6, 0, 0.45],
    [723, 14, 0, 1],
    [744, 6, 0, 0.45]
];

// weak traces: center, half width, top row
const traces = [[242, 6, 10], [455, 6, 30], [627, 8, 5], [774, 12, 5], [855, 12, 5], [1090, 6, 35], [1135, 8, 30], [1200, 8, 35]];

let seed = 20160918;
function random() {
    seed = (seed * 1664525 + 1013904223) % 4294967296;
    return seed / 4294967296;
}

function drawNoise() {
    for (let y = 0; y < height; y++) {
        for (let x = 0; x < width; x += 2) {
            let power = 1;
            if (x < 55) power = (x - 22) / 33;
            if (x > 1370) power = Math.min(1, (1505 - x) / 120);
            if (x < 4) power = 0.4;
            if (x >= 1500 || random() > power * 1.4) continue;

            const shade = 180 + random() * 50;
            ctx.fillStyle = `rgb(${shade * 0.16}, 0, ${shade * Math.min(1, power * 0.7 + 0.35)})`;

            let speck = x < 150 ? 0.005 : x < 230 ? 0.02 : x < 1250 ? 0.07 : 0.06 * Math.max(0, (1400 - x) / 150);
            for (const [center, half, top] of traces) {
                if (Math.abs(x - center) < half && y > top) speck = 0.14;
            }
            if (random() < speck) {
                ctx.fillStyle = random() < 0.5 ? "#6f7cb0" : "#5350d8";
                if (speck > 0.1 && random() < 0.6) ctx.fillStyle = "#9098a0";
            } else if (power === 1 && random() < 0.12) {
                ctx.fillStyle = "#3a35ea";
            }
            ctx.fillRect(x, y, random() < 0.3 ? 3 : 2, 1);
        }
    }
}

function drawSignals() {
    for (const [center, half, top, strength] of signals) {
        for (let y = top; y < height; y++) {
            if (center > 700 && center < 750 && y > 56) break;
            for (let x = center - half - 3; x < center + half + 3; x++) {
                const distance = Math.abs(x - center) / half;
                if (random() > strength * (1.9 - distance * 1.2)) continue;
                const light = 145 + strength * 65 + random() * 30 - distance * 40;
                ctx.fillStyle = `rgb(${light}, ${light + 5}, ${130 - strength * 60})`;
                ctx.fillRect(x, y, 1, 1);
            }
        }
    }
    // start tones
    ctx.fillStyle = "#d5da60";
    ctx.fillRect(352, 27, 11, 2);
    ctx.fillRect(355, 27, 4, 8);
    ctx.fillRect(419, 24, 8, 2);
    ctx.fillRect(421, 24, 4, 9);
    ctx.fillRect(383, 0, 4, 6);
    ctx.fillRect(376, 4, 18, 2);
    ctx.fillStyle = "#8a7f70";
    ctx.fillRect(251, 37, 42, 1);
    ctx.fillStyle = "#e6ea50";
    ctx.fillRect(714, 56, 4, 10);
    ctx.fillRect(729, 56, 4, 10);
    ctx.fillRect(716, 65, 15, 2);
    ctx.fillStyle = "#c5ca60";
    ctx.fillRect(699, 56, 2, 10);
    ctx.fillRect(746, 56, 2, 10);
}

function drawCursor() {
    ctx.fillStyle = "#f01040";
    ctx.fillRect(476, 0, 1, height);
    ctx.fillRect(492, 0, 1, height);
}

drawNoise();
drawSignals();
drawCursor();
```
